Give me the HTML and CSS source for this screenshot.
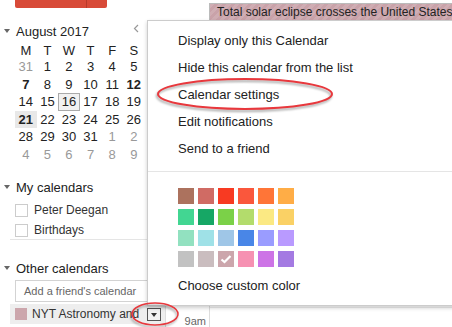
FILE: index.html
```html
<!DOCTYPE html>
<html lang="en">
<head>
    <meta charset="UTF-8">
    <meta name="viewport" content="width=device-width, initial-scale=1.0">
    <title>Calendar</title>
    <link rel="stylesheet" href="styles.css">
</head>
<body>
    <div id="app">
        <div class="sidebar">
            <div class="create-btn"><span class="create-split"></span></div>

            <div class="mini-head">
                <span class="tri"></span>
                <span class="mini-title">August 2017</span>
                <svg class="mini-nav" width="6" height="9" viewBox="0 0 6 9"><polyline points="5,1 1.5,4.5 5,8" fill="none" stroke="#999" stroke-width="1.2"/></svg>
            </div>

            <div class="mini-grid">
                <span class="dow">M</span><span class="dow">T</span><span class="dow">W</span><span class="dow">T</span><span class="dow">F</span><span class="dow">S</span><span class="dow">S</span>
                <span class="day off">31</span><span class="day">1</span><span class="day">2</span><span class="day">3</span><span class="day">4</span><span class="day">5</span><span class="day">6</span>
                <span class="day bold">7</span><span class="day">8</span><span class="day">9</span><span class="day">10</span><span class="day">11</span><span class="day bold">12</span><span class="day">13</span>
                <span class="day">14</span><span class="day">15</span><span class="day today">16</span><span class="day">17</span><span class="day">18</span><span class="day">19</span><span class="day">20</span>
                <span class="day bold selected">21</span><span class="day">22</span><span class="day">23</span><span class="day">24</span><span class="day">25</span><span class="day">26</span><span class="day">27</span>
                <span class="day">28</span><span class="day">29</span><span class="day">30</span><span class="day">31</span><span class="day off">1</span><span class="day off">2</span><span class="day off">3</span>
                <span class="day off">4</span><span class="day off">5</span><span class="day off">6</span><span class="day off">7</span><span class="day off">8</span><span class="day off">9</span><span class="day off">10</span>
            </div>

            <div class="section-head mine"><span class="tri"></span>My calendars</div>
            <div class="cal-item first"><span class="checkbox"></span>Peter Deegan</div>
            <div class="cal-item"><span class="checkbox"></span>Birthdays</div>
            <div class="divider"></div>

            <div class="section-head other"><span class="tri"></span>Other calendars</div>
            <div class="friend-input">Add a friend's calendar</div>
            <div class="cal-item nyt">
                <span class="swatch"></span>
                <span class="nyt-label">NYT Astronomy and</span>
                <span class="drop-btn"></span>
            </div>
        </div>

        <div class="main">
            <div class="allday">
                <div class="event">Total solar eclipse crosses the United States</div>
            </div>
            <div class="timegrid">
                <div class="gutter"><span class="hour">9am</span></div>
                <div class="daycol"></div>
            </div>
        </div>

        <div class="menu">
            <div class="menu-item">Display only this Calendar</div>
            <div class="menu-item">Hide this calendar from the list</div>
            <div class="menu-item">Calendar settings</div>
            <div class="menu-item">Edit notifications</div>
            <div class="menu-item">Send to a friend</div>
            <div class="menu-sep"></div>
            <div class="palette">
                <span style="background:#ac725e"></span>
                <span style="background:#d06b64"></span>
                <span style="background:#f83a22"></span>
                <span style="background:#fa573c"></span>
                <span style="background:#ff7537"></span>
                <span style="background:#ffad46"></span>
                <span style="background:#42d692"></span>
                <span style="background:#16a765"></span>
                <span style="background:#7bd148"></span>
                <span style="background:#b3dc6c"></span>
                <span style="background:#fbe983"></span>
                <span style="background:#fad165"></span>
                <span style="background:#92e1c0"></span>
                <span style="background:#9fe1e7"></span>
                <span style="background:#9fc6e7"></span>
                <span style="background:#4986e7"></span>
                <span style="background:#9a9cff"></span>
                <span style="background:#b99aff"></span>
                <span style="background:#c2c2c2"></span>
                <span style="background:#cabdbf"></span>
                <span class="picked" style="background:#cca6ac">
                    <svg width="16" height="16" viewBox="0 0 16 16"><polyline points="3.5,8.5 6.5,11 12.5,5" fill="none" stroke="#fff" stroke-width="2.2"/></svg>
                </span>
                <span style="background:#f691b2"></span>
                <span style="background:#cd74e6"></span>
                <span style="background:#a47ae2"></span>
            </div>
            <div class="menu-item custom">Choose custom color</div>
        </div>

        <!-- red annotation rings drawn over the screenshot -->
        <svg class="marks" width="452" height="327" viewBox="0 0 452 327">
            <ellipse cx="245" cy="94" rx="87" ry="15" fill="none" stroke="#e8383d" stroke-width="2"/>
            <ellipse cx="155" cy="314" rx="23" ry="11" fill="none" stroke="#e8383d" stroke-width="1.5"/>
        </svg>
    </div>
</body>
</html>
```

FILE: styles.css
```css
html, body {
    margin: 0;
    padding: 0;
}
body {
    background-color: #fff;
    font-family: "Liberation Sans", Arial, sans-serif;
    color: #222;
    overflow: hidden;
}
#app {
    position: relative;
    display: flex;
    width: 452px;
    height: 327px;
    overflow: hidden;
}

/* left column */
.sidebar {
    width: 165px;
    flex-shrink: 0;
}
.create-btn {
    position: relative;
    width: 92px;
    height: 8px;
    margin-left: 15px;
    background-color: #d84a38;
    border-radius: 0 0 2px 2px;
}
.create-split {
    position: absolute;
    left: 71px;
    top: 0;
    width: 1px;
    height: 100%;
    background-color: #b83a2a;
}
.tri {
    display: inline-block;
    width: 0;
    height: 0;
    border-left: 3.5px solid transparent;
    border-right: 3.5px solid transparent;
    border-top: 4px solid #666;
    margin: 0 6px 0 4px;
    vertical-align: middle;
}
.mini-head {
    display: flex;
    align-items: center;
    height: 18px;
    margin-top: 14px;
    font-size: 13px;
}
.mini-nav {
    margin-left: 44px;
    margin-top: -5px;
}
.mini-grid {
    display: grid;
    grid-template-columns: repeat(7, 21.6px);
    grid-auto-rows: 17.5px;
    grid-template-rows: 16px;
    margin: 2px 0 0 15px;
    font-size: 13px;
}
.mini-grid span {
    display: flex;
    align-items: center;
    justify-content: center;
    box-sizing: border-box;
}
.dow {
    color: #222;
}
.day.off {
    color: #999;
}
.day.bold {
    font-weight: bold;
}
.day.today {
    border: 1px solid #aaa;
    background-color: #f1f1f1;
}
.day.selected {
    background-color: #e8e8e8;
}
.section-head {
    display: flex;
    align-items: center;
    font-size: 13px;
    height: 18px;
}
.section-head.mine {
    margin-top: 15px;
}
.section-head.other {
    margin-top: 19px;
}
.cal-item {
    display: flex;
    align-items: center;
    height: 20px;
    font-size: 12px;
    color: #333;
}
.cal-item.first {
    margin-top: 4px;
}
.checkbox {
    width: 11px;
    height: 11px;
    border: 1px solid #ccc;
    margin: 0 6px 0 15px;
}
.divider {
    height: 1px;
    background-color: #e5e5e5;
    margin: -1px 0 0 10px;
}
.friend-input {
    height: 20px;
    line-height: 20px;
    margin: 3px 0 2px 15px;
    padding-left: 8px;
    border: 1px solid #d3d3d3;
    border-right: none;
    font-size: 11px;
    color: #666;
}
.cal-item.nyt {
    background-color: #eee;
    margin-left: 10px;
}
.swatch {
    width: 12px;
    height: 12px;
    background-color: #cca6ac;
    margin: 0 5px 0 5px;
}
.drop-btn {
    position: relative;
    width: 12px;
    height: 11px;
    margin: 0 4px 0 auto;
    border: 1px solid #555;
    background-color: #f2f2f2;
}
.drop-btn::after {
    content: "";
    position: absolute;
    left: 3px;
    top: 4px;
    border-left: 3px solid transparent;
    border-right: 3px solid transparent;
    border-top: 4px solid #333;
}

/* right column */
.main {
    flex: 1;
    display: flex;
    flex-direction: column;
}
.allday {
    height: 306px;
    padding: 3px 0 0 44px;
    box-sizing: border-box;
}
.event {
    height: 16px;
    line-height: 16px;
    border-top: 1px solid #bbb;
    border-left: 1px solid #bbb;
    padding-left: 7px;
    white-space: nowrap;
    overflow: hidden;
    font-size: 12px;
    color: #222;
    background-color: #c9a2a9;
    background-image: repeating-linear-gradient(135deg, rgba(255,255,255,0.12) 0 3px, transparent 3px 6px);
}
.timegrid {
    flex: 1;
    display: flex;
    border-top: 1px solid #ddd;
}
.gutter {
    width: 43px;
    border-left: 1px solid #ddd;
    border-right: 1px solid #ddd;
    text-align: right;
    font-size: 11px;
    color: #666;
}
.hour {
    display: block;
    padding: 20px 3px 0 0;
}
.daycol {
    flex: 1;
    border-top: 1px solid #eee;
    margin-top: 12px;
}

/* popup menu */
.menu {
    position: absolute;
    left: 147px;
    top: 20px;
    width: 330px;
    padding: 6px 0;
    background-color: #fff;
    border: 1px solid rgba(0, 0, 0, 0.2);
    box-shadow: 0 2px 4px rgba(0, 0, 0, 0.2);
}
.menu-item {
    height: 27px;
    line-height: 27px;
    padding-left: 30px;
    font-size: 13px;
    color: #222;
}
.menu-sep {
    height: 1px;
    background-color: #e5e5e5;
    margin: 9px 0 16px;
}
.palette {
    display: grid;
    grid-template-columns: repeat(6, 16px);
    grid-auto-rows: 16px;
    gap: 5px 4px;
    margin-left: 30px;
}
.palette span {
    display: block;
}
.palette svg {
    display: block;
}
.menu-item.custom {
    margin-top: 5px;
}

.marks {
    position: absolute;
    left: 0;
    top: 0;
    pointer-events: none;
}
.marks ellipse {
    filter: drop-shadow(-1px 2px 1px rgba(0, 0, 0, 0.35));
}
```
